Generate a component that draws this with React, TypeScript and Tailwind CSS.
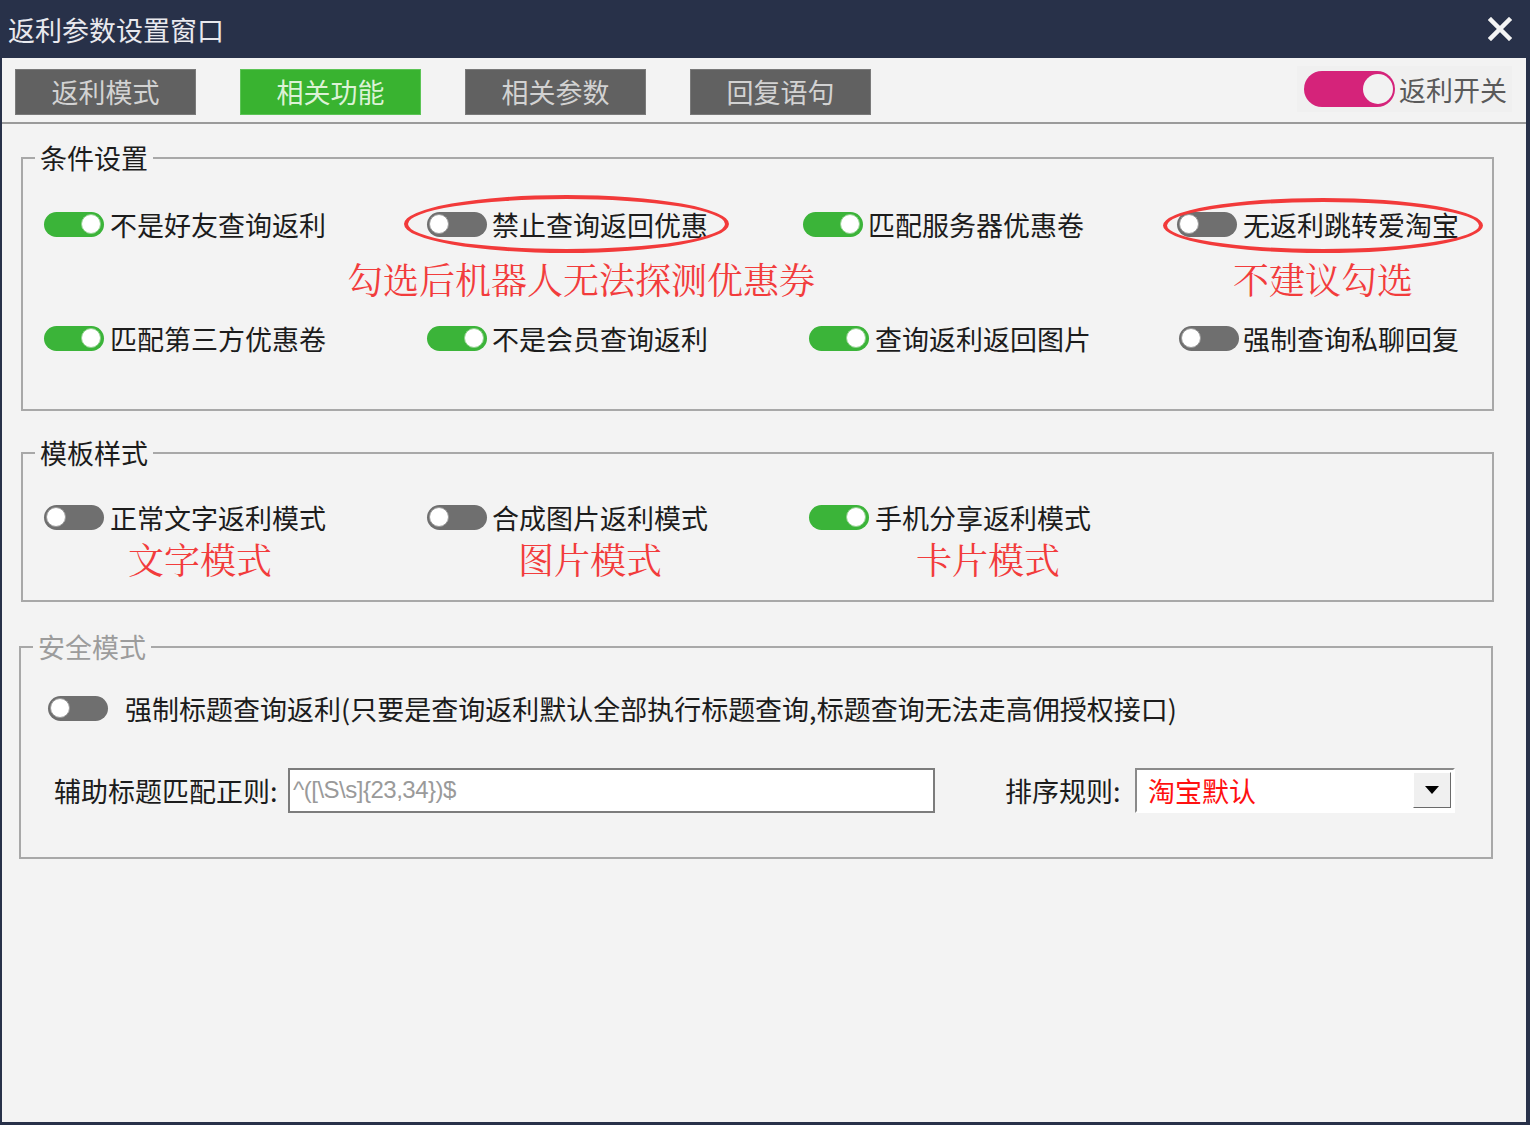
import React from 'react';
import clsx from 'clsx';

const ui = { fontFamily: '"Noto Sans CJK SC", "Microsoft YaHei", sans-serif' };
const note = { fontFamily: '"Noto Serif CJK SC", "Noto Sans CJK SC", serif' };

function Toggle({ on }: { on?: boolean }) {
  return (
    <span
      className={clsx(
        'flex h-[25px] w-[60px] shrink-0 items-center rounded-full',
        on ? 'justify-end bg-[#3bb439] pr-[3px]' : 'justify-start bg-[#6f6f6f] pl-[2px]'
      )}
    >
      <span
        className={clsx(
          'h-[20px] w-[20px] rounded-full bg-white',
          on ? 'border border-[#8fd08c]' : 'border border-[#9a9a9a]'
        )}
      />
    </span>
  );
}

function Item({
  on,
  label,
  width,
  gap = 6,
  ring,
}: {
  on?: boolean;
  label: string;
  width: string;
  gap?: number;
  ring?: 'a' | 'b';
}) {
  return (
    <div className={clsx('relative flex shrink-0 items-center', width)}>
      <Toggle on={on} />
      <span
        className="whitespace-nowrap text-[27px] leading-none text-[#1c1c1c]"
        style={{ marginLeft: gap }}
      >
        {label}
      </span>
      {ring === 'a' && (
        <span className="pointer-events-none absolute left-[-23px] top-[-16px] h-[58px] w-[325px] rounded-[50%] border-[4px] border-[#f23a3a]" />
      )}
      {ring === 'b' && (
        <span className="pointer-events-none absolute left-[-14px] top-[-13px] h-[55px] w-[320px] rounded-[50%] border-[4px] border-[#f23a3a]" />
      )}
    </div>
  );
}

function Group({
  title,
  muted,
  className,
  children,
}: {
  title: string;
  muted?: boolean;
  className?: string;
  children: React.ReactNode;
}) {
  return (
    <fieldset className={clsx('border-2 border-[#a8a8a8]', className)}>
      <legend
        className={clsx(
          'ml-[12px] px-[5px] text-[27px] leading-[36px]',
          muted ? 'text-[#9c9c9c]' : 'text-[#1c1c1c]'
        )}
      >
        {title}
      </legend>
      {children}
    </fieldset>
  );
}

export default function App() {
  return (
    <div className="flex h-[1125px] w-[1530px] flex-col bg-[#283149]" style={ui}>
      {/* title bar */}
      <div className="flex h-[58px] shrink-0 items-center justify-between pl-[8px] pr-[18px]">
        <span className="text-[27px] leading-none text-[#e9e9ee]">返利参数设置窗口</span>
        <svg width="24" height="24" viewBox="0 0 24 24">
          <path d="M3 3 L21 21 M21 3 L3 21" stroke="#f4f4f4" strokeWidth="4.5" strokeLinecap="square" />
        </svg>
      </div>

      {/* body */}
      <div className="mb-[3px] ml-[2px] mr-[4px] flex-1 bg-[#f3f3f3]">
        {/* tabs */}
        <div className="flex h-[66px] items-start border-b-2 border-[#9a9a9a] pl-[13px] pt-[11px]">
          <div className="flex gap-[44px]">
            <div className="flex h-[46px] w-[181px] items-center justify-center border border-[#7a7a7a] bg-[#616161] text-[27px] text-[#d2d2d2]">
              返利模式
            </div>
            <div className="flex h-[46px] w-[181px] items-center justify-center border border-[#5cc456] bg-[#39b330] text-[27px] text-[#dcf2d6]">
              相关功能
            </div>
            <div className="flex h-[46px] w-[181px] items-center justify-center border border-[#7a7a7a] bg-[#616161] text-[27px] text-[#d2d2d2]">
              相关参数
            </div>
            <div className="flex h-[46px] w-[181px] items-center justify-center border border-[#7a7a7a] bg-[#616161] text-[27px] text-[#d2d2d2]">
              回复语句
            </div>
          </div>
          <div className="ml-auto mr-[14px] mt-[-3px] flex h-[46px] items-center bg-[#f0f0f0] pl-[7px] pr-[5px]">
            <span className="flex h-[36px] w-[91px] items-center justify-end rounded-full bg-[#d5237a] pr-[2px]">
              <span className="h-[30px] w-[30px] rounded-full bg-[#f2f2f2]" />
            </span>
            <span className="ml-[4px] text-[27px] leading-none text-[#5a5a5a]">返利开关</span>
          </div>
        </div>

        {/* 条件设置 */}
        <Group title="条件设置" className="ml-[19px] mt-[16px] h-[271px] w-[1473px]">
          <div className="ml-[21px] mt-[28px] flex h-[40px] items-center">
            <Item on label="不是好友查询返利" width="w-[383px]" />
            <Item label="禁止查询返回优惠" width="w-[376px]" gap={5} ring="a" />
            <Item on label="匹配服务器优惠卷" width="w-[374px]" gap={5} />
            <Item label="无返利跳转爱淘宝" width="w-[300px]" gap={6} ring="b" />
          </div>
          <div className="flex h-[70px] items-center text-[36px] leading-none text-[#f23c3c]" style={note}>
            <span className="ml-[324px]">勾选后机器人无法探测优惠券</span>
            <span className="ml-[418px]">不建议勾选</span>
          </div>
          <div className="ml-[21px] flex h-[48px] items-center">
            <Item on label="匹配第三方优惠卷" width="w-[383px]" />
            <Item on label="不是会员查询返利" width="w-[382px]" gap={5} />
            <Item on label="查询返利返回图片" width="w-[370px]" gap={6} />
            <Item label="强制查询私聊回复" width="w-[300px]" gap={4} />
          </div>
        </Group>

        {/* 模板样式 */}
        <Group title="模板样式" className="ml-[19px] mt-[24px] h-[167px] w-[1473px]">
          <div className="ml-[21px] mt-[26px] flex h-[40px] items-center">
            <Item label="正常文字返利模式" width="w-[383px]" />
            <Item label="合成图片返利模式" width="w-[382px]" gap={5} />
            <Item on label="手机分享返利模式" width="w-[370px]" gap={6} />
          </div>
          <div className="flex h-[44px] items-center text-[36px] leading-none text-[#f23c3c]" style={note}>
            <span className="ml-[105px]">文字模式</span>
            <span className="ml-[246px]">图片模式</span>
            <span className="ml-[254px]">卡片模式</span>
          </div>
        </Group>

        {/* 安全模式 */}
        <Group title="安全模式" muted className="ml-[17px] mt-[27px] h-[230px] w-[1474px]">
          <div className="ml-[27px] mt-[23px] flex h-[40px] items-center">
            <Item
              label="强制标题查询返利(只要是查询返利默认全部执行标题查询,标题查询无法走高佣授权接口)"
              width="w-[1200px]"
              gap={17}
            />
          </div>
          <div className="ml-[33px] mt-[39px] flex h-[46px] items-center">
            <span className="w-[234px] shrink-0 whitespace-nowrap text-[27px] leading-none text-[#1c1c1c]">
              辅助标题匹配正则:
            </span>
            <div className="flex h-[45px] w-[647px] items-center border-2 border-[#7c7c7c] bg-white px-[3px]">
              <span
                className="text-[24px] leading-none tracking-[-0.5px] text-[#9a9a9a]"
                style={{ fontFamily: '"Liberation Sans Narrow", "Liberation Sans", sans-serif' }}
              >
                {'^([\\S\\s]{23,34})$'}
              </span>
            </div>
            <span className="ml-[70px] w-[130px] shrink-0 whitespace-nowrap text-[27px] leading-none text-[#1c1c1c]">
              排序规则:
            </span>
            <div className="flex h-[45px] w-[320px] items-center border-2 border-b-white border-l-[#8a8a8a] border-r-white border-t-[#8a8a8a] bg-white pl-[11px] pr-[2px]">
              <span className="text-[27px] leading-none text-[#ff1010]">淘宝默认</span>
              <span className="ml-auto flex h-[36px] w-[38px] items-center justify-center border border-b-[#6a6a6a] border-l-white border-r-[#6a6a6a] border-t-white bg-[#f0f0f0]">
                <svg width="16" height="10" viewBox="0 0 16 10">
                  <path d="M1 1 H15 L8 9 Z" fill="#000" />
                </svg>
              </span>
            </div>
          </div>
        </Group>
      </div>
    </div>
  );
}
